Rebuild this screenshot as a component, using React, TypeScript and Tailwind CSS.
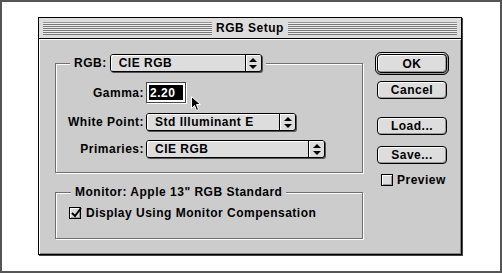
const font = { fontFamily: '"Liberation Sans", Arial, sans-serif' };

function Arrows() {
  return (
    <svg width="8" height="11" viewBox="0 0 8 11">
      <path d="M4 0 L8 4 L0 4 Z" fill="#000" />
      <path d="M0 7 L8 7 L4 11 Z" fill="#000" />
    </svg>
  );
}

function Popup({ label, width }: { label: string; width: string }) {
  return (
    <div className={`flex h-[18px] ${width} rounded-[3px] border border-black bg-[#dddddd] shadow-[1px_1px_0_#555]`}>
      <div className="flex flex-1 items-center pl-[8px] shadow-[inset_1px_1px_0_#fff] rounded-l-[2px] text-[12px] font-bold leading-none tracking-[0.5px]">
        {label}
      </div>
      <div className="flex w-[16px] items-center justify-center border-l border-black shadow-[inset_1px_1px_0_#fff] rounded-r-[2px]">
        <Arrows />
      </div>
    </div>
  );
}

function Button({ label, big }: { label: string; big?: boolean }) {
  const inner = (
    <div className="flex h-[18px] w-[70px] items-center justify-center rounded-[4px] border border-black bg-[#dddddd] shadow-[inset_1px_1px_0_#fff,inset_-1px_-1px_0_#999] text-[12px] font-bold leading-none tracking-[0.5px]">
      {label}
    </div>
  );
  if (!big) return <div className="flex justify-center">{inner}</div>;
  return (
    <div className="flex h-[23px] w-[74px] items-center justify-center rounded-[6px] border border-black bg-[#999] shadow-[inset_1px_1px_0_#eee]">
      <div className="flex h-[19px] w-[70px] items-center justify-center rounded-[4px] border border-black bg-[#dddddd] shadow-[inset_1px_1px_0_#fff,inset_-1px_-1px_0_#999] text-[12px] font-bold leading-none tracking-[0.5px]">
        {label}
      </div>
    </div>
  );
}

function Check({ checked }: { checked?: boolean }) {
  return (
    <div className="relative h-[12px] w-[12px] border border-black bg-[#dddddd] shadow-[inset_1px_1px_0_#fff,inset_-1px_-1px_0_#999]">
      {checked && (
        <svg className="absolute left-[0px] top-[-1px]" width="12" height="12" viewBox="0 0 12 12">
          <path d="M2 6 L5 9 L11 1" stroke="#000" strokeWidth="2" fill="none" />
        </svg>
      )}
    </div>
  );
}

function Label({ children }: { children: string }) {
  return <div className="w-[90px] pr-[2px] text-right text-[12px] font-bold leading-none tracking-[0.5px]">{children}</div>;
}

export default function App() {
  return (
    <div className="h-[273px] w-[502px] border-2 border-[#555] bg-white text-black" style={font}>
      <div className="ml-[36px] mt-[15px] w-[424px] border border-black bg-[#cccccc] shadow-[1px_1px_0_#444]">
        {/* title bar */}
        <div className="flex h-[21px] items-center border-b border-black bg-[#dddddd] px-[4px]">
          <div className="h-[13px] flex-1 bg-[repeating-linear-gradient(to_bottom,#eeeeee_0,#eeeeee_1px,#777777_1px,#777777_2px)] border-t border-[#999]" />
          <div className="px-[4px] text-[12px] font-bold leading-none tracking-[0.5px]">RGB Setup</div>
          <div className="h-[13px] flex-1 bg-[repeating-linear-gradient(to_bottom,#eeeeee_0,#eeeeee_1px,#777777_1px,#777777_2px)] border-t border-[#999]" />
        </div>

        <div className="relative flex h-[215px] pl-[16px] shadow-[inset_1px_1px_0_#fff,inset_-1px_-1px_0_#888]">
          {/* left column */}
          <div className="w-[308px] pt-[24px]">
            <div className="relative h-[110px] border border-[#707070] shadow-[1px_1px_0_#fff,inset_1px_1px_0_#fff]">
              <div className="absolute -top-[10px] left-[14px] flex items-center gap-[3px] bg-[#cccccc] px-[4px]">
                <span className="text-[12px] font-bold leading-none tracking-[0.5px]">RGB:</span>
                <Popup label="CIE RGB" width="w-[152px]" />
              </div>
              <div className="flex flex-col pt-[18px]">
                <div className="flex h-[21px] items-center">
                  <Label>Gamma:</Label>
                  <div className="relative h-[21px] w-[40px] border border-[#444] bg-white p-[2px] shadow-[1px_1px_0_#fff]">
                    <div className="flex h-full items-center bg-black pl-[1px] text-[12px] font-bold leading-none tracking-[0.5px] text-white">2.20</div>
                    <svg className="absolute left-[44px] top-[13px]" width="11" height="16" viewBox="0 0 11 16">
                      <path d="M0.5 0.5 L0.5 12.5 L3.5 9.5 L5.5 14.5 L7.5 13.5 L5.5 8.5 L9.5 8.5 Z" fill="#000" stroke="#fff" strokeWidth="1" />
                    </svg>
                  </div>
                </div>
                <div className="mt-[10px] flex h-[18px] items-center">
                  <Label>White Point:</Label>
                  <Popup label="Std Illuminant E" width="w-[150px]" />
                </div>
                <div className="mt-[9px] flex h-[18px] items-center">
                  <Label>Primaries:</Label>
                  <Popup label="CIE RGB" width="w-[179px]" />
                </div>
              </div>
            </div>

            <div className="relative mt-[19px] h-[47px] border border-[#707070] shadow-[1px_1px_0_#fff,inset_1px_1px_0_#fff]">
              <div className="absolute -top-[7px] left-[15px] bg-[#cccccc] px-[4px] text-[12px] font-bold leading-none tracking-[0.5px]">
                Monitor: Apple 13" RGB Standard
              </div>
              <div className="flex items-center gap-[5px] pl-[13px] pt-[14px]">
                <Check checked />
                <span className="text-[12px] font-bold leading-none tracking-[0.5px]">Display Using Monitor Compensation</span>
              </div>
            </div>
          </div>

          {/* right column */}
          <div className="ml-[12px] flex w-[74px] flex-col pt-[13px]">
            <Button label="OK" big />
            <div className="mt-[6px]">
              <Button label="Cancel" />
            </div>
            <div className="mt-[18px]">
              <Button label="Load..." />
            </div>
            <div className="mt-[11px]">
              <Button label="Save..." />
            </div>
            <div className="mt-[10px] flex items-center gap-[4px] pl-[6px]">
              <Check />
              <span className="text-[12px] font-bold leading-none tracking-[0.5px]">Preview</span>
            </div>
          </div>
        </div>
      </div>
    </div>
  );
}
